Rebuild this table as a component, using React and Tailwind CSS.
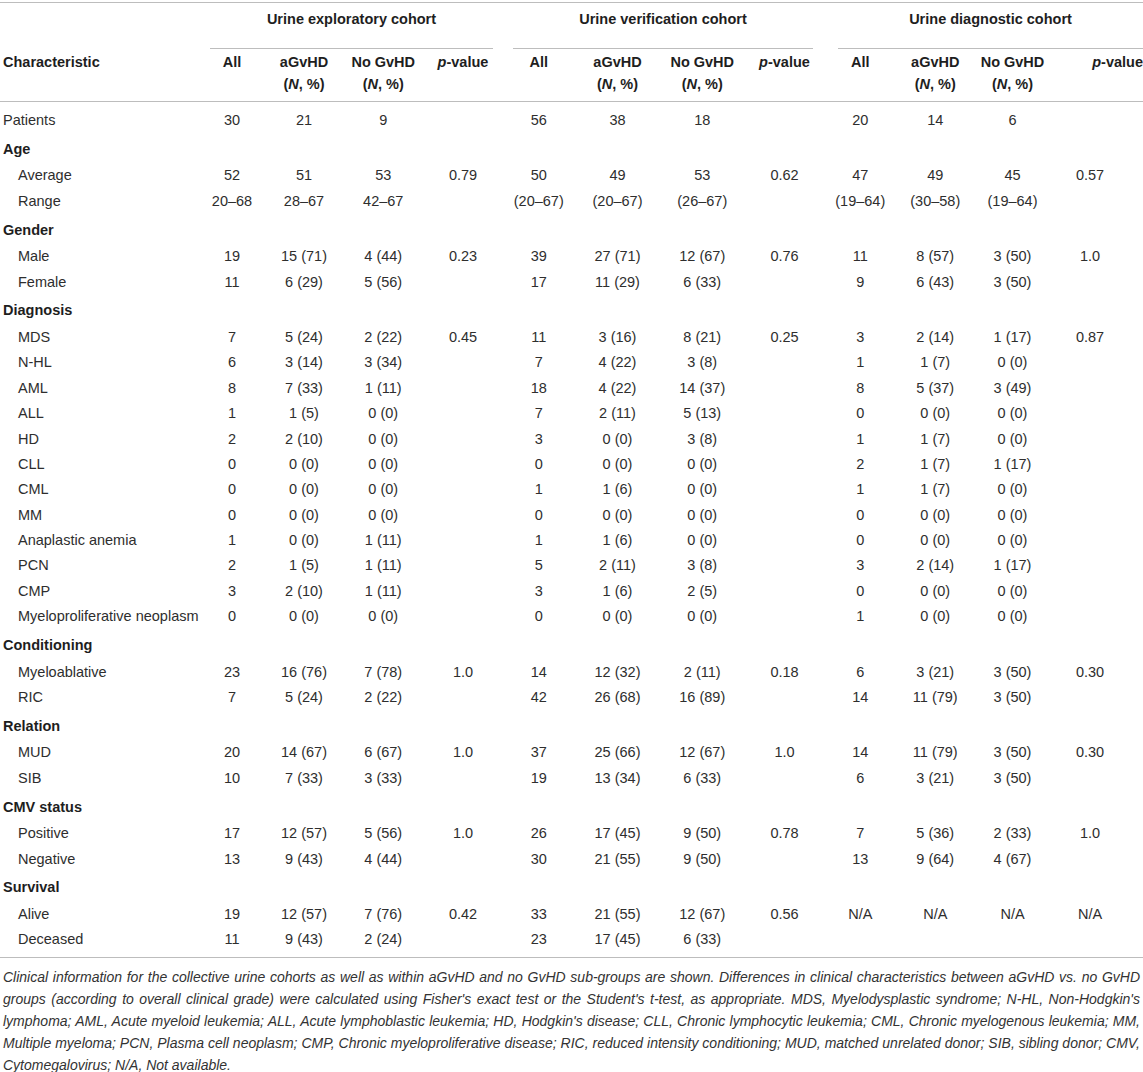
import React from 'react'

const GRID =
  'grid grid-cols-[198px_68px_76px_82.5px_77px_74.5px_83px_86.5px_78px_73.5px_76.5px_78px_91.5px]'

const rows = [
  { label: 'Patients', v: ['30', '21', '9', '', '56', '38', '18', '', '20', '14', '6', ''] },
  { section: 'Age' },
  { label: 'Average', sub: true, v: ['52', '51', '53', '0.79', '50', '49', '53', '0.62', '47', '49', '45', '0.57'] },
  { label: 'Range', sub: true, v: ['20–68', '28–67', '42–67', '', '(20–67)', '(20–67)', '(26–67)', '', '(19–64)', '(30–58)', '(19–64)', ''] },
  { section: 'Gender' },
  { label: 'Male', sub: true, v: ['19', '15 (71)', '4 (44)', '0.23', '39', '27 (71)', '12 (67)', '0.76', '11', '8 (57)', '3 (50)', '1.0'] },
  { label: 'Female', sub: true, v: ['11', '6 (29)', '5 (56)', '', '17', '11 (29)', '6 (33)', '', '9', '6 (43)', '3 (50)', ''] },
  { section: 'Diagnosis' },
  { label: 'MDS', sub: true, v: ['7', '5 (24)', '2 (22)', '0.45', '11', '3 (16)', '8 (21)', '0.25', '3', '2 (14)', '1 (17)', '0.87'] },
  { label: 'N-HL', sub: true, v: ['6', '3 (14)', '3 (34)', '', '7', '4 (22)', '3 (8)', '', '1', '1 (7)', '0 (0)', ''] },
  { label: 'AML', sub: true, v: ['8', '7 (33)', '1 (11)', '', '18', '4 (22)', '14 (37)', '', '8', '5 (37)', '3 (49)', ''] },
  { label: 'ALL', sub: true, v: ['1', '1 (5)', '0 (0)', '', '7', '2 (11)', '5 (13)', '', '0', '0 (0)', '0 (0)', ''] },
  { label: 'HD', sub: true, v: ['2', '2 (10)', '0 (0)', '', '3', '0 (0)', '3 (8)', '', '1', '1 (7)', '0 (0)', ''] },
  { label: 'CLL', sub: true, v: ['0', '0 (0)', '0 (0)', '', '0', '0 (0)', '0 (0)', '', '2', '1 (7)', '1 (17)', ''] },
  { label: 'CML', sub: true, v: ['0', '0 (0)', '0 (0)', '', '1', '1 (6)', '0 (0)', '', '1', '1 (7)', '0 (0)', ''] },
  { label: 'MM', sub: true, v: ['0', '0 (0)', '0 (0)', '', '0', '0 (0)', '0 (0)', '', '0', '0 (0)', '0 (0)', ''] },
  { label: 'Anaplastic anemia', sub: true, v: ['1', '0 (0)', '1 (11)', '', '1', '1 (6)', '0 (0)', '', '0', '0 (0)', '0 (0)', ''] },
  { label: 'PCN', sub: true, v: ['2', '1 (5)', '1 (11)', '', '5', '2 (11)', '3 (8)', '', '3', '2 (14)', '1 (17)', ''] },
  { label: 'CMP', sub: true, v: ['3', '2 (10)', '1 (11)', '', '3', '1 (6)', '2 (5)', '', '0', '0 (0)', '0 (0)', ''] },
  { label: 'Myeloproliferative neoplasm', sub: true, v: ['0', '0 (0)', '0 (0)', '', '0', '0 (0)', '0 (0)', '', '1', '0 (0)', '0 (0)', ''] },
  { section: 'Conditioning' },
  { label: 'Myeloablative', sub: true, v: ['23', '16 (76)', '7 (78)', '1.0', '14', '12 (32)', '2 (11)', '0.18', '6', '3 (21)', '3 (50)', '0.30'] },
  { label: 'RIC', sub: true, v: ['7', '5 (24)', '2 (22)', '', '42', '26 (68)', '16 (89)', '', '14', '11 (79)', '3 (50)', ''] },
  { section: 'Relation' },
  { label: 'MUD', sub: true, v: ['20', '14 (67)', '6 (67)', '1.0', '37', '25 (66)', '12 (67)', '1.0', '14', '11 (79)', '3 (50)', '0.30'] },
  { label: 'SIB', sub: true, v: ['10', '7 (33)', '3 (33)', '', '19', '13 (34)', '6 (33)', '', '6', '3 (21)', '3 (50)', ''] },
  { section: 'CMV status' },
  { label: 'Positive', sub: true, v: ['17', '12 (57)', '5 (56)', '1.0', '26', '17 (45)', '9 (50)', '0.78', '7', '5 (36)', '2 (33)', '1.0'] },
  { label: 'Negative', sub: true, v: ['13', '9 (43)', '4 (44)', '', '30', '21 (55)', '9 (50)', '', '13', '9 (64)', '4 (67)', ''] },
  { section: 'Survival' },
  { label: 'Alive', sub: true, v: ['19', '12 (57)', '7 (76)', '0.42', '33', '21 (55)', '12 (67)', '0.56', 'N/A', 'N/A', 'N/A', 'N/A'] },
  { label: 'Deceased', sub: true, v: ['11', '9 (43)', '2 (24)', '', '23', '17 (45)', '6 (33)', '', '', '', '', ''] },
]

function SubHead({ cohort }) {
  return (
    <>
      <div className="text-center">All</div>
      <div className="text-center">
        aGvHD
        <br />(<i>N</i>, %)
      </div>
      <div className="text-center">
        No GvHD
        <br />(<i>N</i>, %)
      </div>
      {cohort === 3 ? (
        <div className="text-right">
          <i>p</i>-value
        </div>
      ) : (
        <div className="text-center">
          <i>p</i>-value
        </div>
      )}
    </>
  )
}

export default function App() {
  return (
    <div className="bg-white w-[1143px] h-[1072px] overflow-hidden pt-[2px] font-['Liberation_Sans',Arial,sans-serif] text-[14.5px] text-[#2e2e2e]">
      <div className="border-t border-b border-[#bdbdbd] pb-[4px]">
        {/* cohort headers */}
        <div className={GRID + ' font-bold text-[#1e1e1e] leading-[20px]'}>
          <div />
          <div className="col-span-4 ml-[12px] mr-[8.5px] border-b border-[#bdbdbd] pt-[6px] pb-[19px] text-center">
            Urine exploratory cohort
          </div>
          <div className="col-span-4 ml-[11.5px] mr-[10.5px] border-b border-[#bdbdbd] pt-[6px] pb-[19px] text-center">
            Urine verification cohort
          </div>
          <div className="col-span-4 ml-[14.5px] border-b border-[#bdbdbd] pt-[6px] pb-[19px] text-center">
            Urine diagnostic cohort
          </div>
        </div>

        {/* column headers */}
        <div className={GRID + ' font-bold text-[#1e1e1e] leading-[22px] pt-[1.5px] pb-[6.5px] border-b border-[#bdbdbd]'}>
          <div className="pl-[3px]">Characteristic</div>
          <SubHead cohort={1} />
          <SubHead cohort={2} />
          <SubHead cohort={3} />
        </div>

        {/* body */}
        <div className="pt-[6px]">
          {rows.map((r, i) =>
            r.section ? (
              <div key={i} className="h-[30px] pt-[1.5px] leading-[28.5px] pl-[3px] font-bold text-[#1e1e1e]">
                {r.section}
              </div>
            ) : (
              <div key={i} className={GRID + ' h-[25.4px] leading-[25.4px]'}>
                <div className={r.sub ? 'pl-[18px] whitespace-nowrap' : 'pl-[3px] whitespace-nowrap'}>{r.label}</div>
                {r.v.map((x, j) => (
                  <div key={j} className={j === 11 ? 'text-center pr-[14.5px]' : 'text-center'}>
                    {x}
                  </div>
                ))}
              </div>
            )
          )}
        </div>
      </div>

      {/* footnote */}
      <div className="pt-[8px] px-[3px] italic text-[14px] leading-[22px] text-[#333]">
        <div className="text-justify [text-align-last:justify] whitespace-nowrap">
          Clinical information for the collective urine cohorts as well as within aGvHD and no GvHD sub-groups are shown. Differences in clinical characteristics between aGvHD vs. no GvHD
        </div>
        <div className="text-justify [text-align-last:justify] whitespace-nowrap">
          groups (according to overall clinical grade) were calculated using Fisher's exact test or the Student's t-test, as appropriate. MDS, Myelodysplastic syndrome; N-HL, Non-Hodgkin's
        </div>
        <div className="text-justify [text-align-last:justify] whitespace-nowrap">
          lymphoma; AML, Acute myeloid leukemia; ALL, Acute lymphoblastic leukemia; HD, Hodgkin's disease; CLL, Chronic lymphocytic leukemia; CML, Chronic myelogenous leukemia; MM,
        </div>
        <div className="text-justify [text-align-last:justify] whitespace-nowrap">
          Multiple myeloma; PCN, Plasma cell neoplasm; CMP, Chronic myeloproliferative disease; RIC, reduced intensity conditioning; MUD, matched unrelated donor; SIB, sibling donor; CMV,
        </div>
        <div>Cytomegalovirus; N/A, Not available.</div>
      </div>
    </div>
  )
}
